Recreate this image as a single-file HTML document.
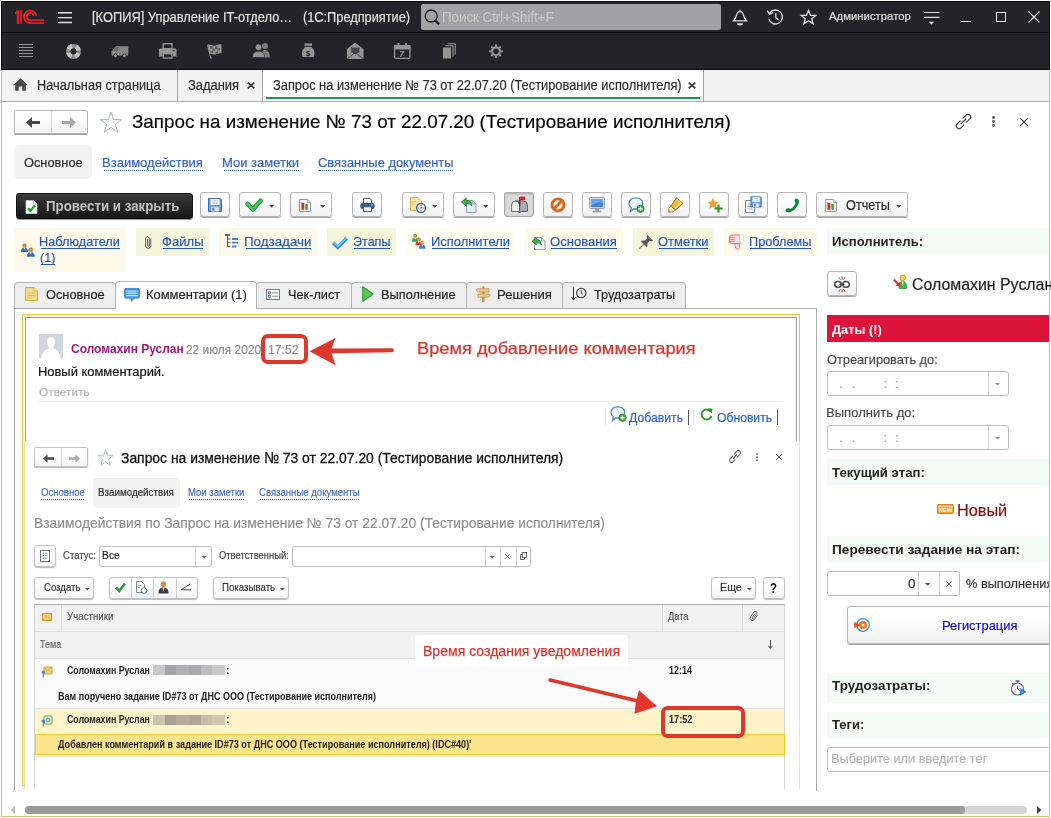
<!DOCTYPE html>
<html lang="ru">
<head>
<meta charset="utf-8">
<title>Запрос на изменение № 73 от 22.07.20</title>
<style>
*{box-sizing:border-box;margin:0;padding:0}
html,body{width:1051px;height:818px;overflow:hidden;background:#fff}
body{font-family:"Liberation Sans",sans-serif;font-size:13px;color:#222;position:relative}
.a{position:absolute}
.t{position:absolute;white-space:nowrap;line-height:1;transform-origin:0 0;-webkit-text-stroke:0.18px currentColor}
svg{position:absolute;overflow:visible}
.btn{position:absolute;border:1px solid #b6b6b6;border-radius:3px;background:linear-gradient(#ffffff 30%,#f0f0f0);box-shadow:0 1px 0 #a6a6a6}
.btn2{position:absolute;border:1px solid #c2c2c2;border-radius:3px;background:linear-gradient(#ffffff 30%,#f3f3f3);box-shadow:0 1px 1px #b9b9b9}
.u{text-decoration:underline;text-underline-offset:2px}
.dl{border-bottom:1px dotted #3a66c8}
.caret{position:absolute;width:0;height:0;border-left:3px solid transparent;border-right:3px solid transparent;border-top:3px solid #444}
.inp{position:absolute;border:1px solid #bdbdbd;border-radius:3px;background:#fff}
.sub{filter:blur(0.35px)}
</style>
</head>
<body>
<div class="a" style="left:1px;top:1px;width:1049px;height:69px;background:#0c0c0e;"></div>
<div class="a" style="left:2px;top:2px;width:1047px;height:30px;background:#242428;"></div>
<div class="a" style="left:2px;top:33px;width:1047px;height:36px;background:#242428;"></div>
<div class="a" style="left:1px;top:70px;width:1px;height:747px;background:#cdbf78;"></div>
<div class="a" style="left:1049px;top:70px;width:1px;height:747px;background:#cdbf78;"></div>
<div class="a" style="left:1px;top:816px;width:1049px;height:1px;background:#cdbf78;"></div>
<svg style="left:0px;top:0px" width="50" height="30" viewBox="0 0 50 30" fill="none" stroke="#e01f26">
<path d="M15.300 14L17.600 10.900" stroke-width="2"/>
<path d="M18 10.300V24" stroke-width="2.400"/><path d="M20.900 10.300V24" stroke-width="1.700"/>
<path d="M36.300 15.700A6.200 6.200 0 1 0 30.200 23.050H44.100" stroke-width="1.800"/>
<path d="M33.800 15.700A3.650 3.650 0 1 0 30.200 20.150H44.100" stroke-width="1.800"/>
</svg>
<svg style="left:58px;top:12px" width="14" height="11" viewBox="0 0 14 11" stroke="#e4e4e4" stroke-width="1.400"><path d="M0 0.700H14M0 5.600H14M0 10.500H14"/></svg>
<div class="t" style="left:91.60px;top:10.15px;font-size:14px;color:#e4e4e4;transform:scaleX(0.9187);">[КОПИЯ] Управление IT-отдело…</div>
<div class="t" style="left:303.23px;top:10.15px;font-size:14px;color:#e4e4e4;transform:scaleX(0.9118);">(1С:Предприятие)</div>
<div class="a" style="left:421px;top:4px;width:300px;height:26px;background:#a2a2a4;border-radius:2px"></div>
<svg style="left:424px;top:8px" width="17" height="18" viewBox="0 0 17 18" fill="none" stroke="#1c1c1c" stroke-width="1.300"><circle cx="7.200" cy="8" r="6"/><path d="M11.400 12.600L15.200 16.600" stroke-width="2.200"/></svg>
<div class="t" style="left:441.94px;top:10.15px;font-size:14px;color:#c6c6c6;transform:scaleX(0.9501);">Поиск Ctrl+Shift+F</div>
<svg style="left:732px;top:8px" width="16" height="19" viewBox="0 0 16 19" fill="none" stroke="#dedede" stroke-width="1.200"><path d="M8 1.800V3.300M5.600 4.600C6.500 3.400 9.500 3.400 10.400 4.600C11.800 7 11.500 10 14.600 12.800H1.400C4.500 10 4.200 7 5.600 4.600Z"/><path d="M5 15.200H11A3 2.200 0 0 1 5 15.200Z" fill="#dedede" stroke="none"/></svg>
<svg style="left:765.5px;top:8px" width="19" height="18" viewBox="0 0 19 18" fill="none" stroke="#dedede" stroke-width="1.300"><path d="M3.800 4.800A7 7 0 1 1 2.800 11.300"/><path d="M1.200 2.600L3.400 6.200L7 4.600"/><path d="M9.800 5.200V9.600L12.600 11.800"/></svg>
<svg style="left:799.5px;top:8.5px" width="17" height="17" viewBox="0 0 17 17" fill="none" stroke="#dedede" stroke-width="1.300"><path d="M8.500 1.500L10.600 6.400H15.800L11.700 9.700L13.200 14.900L8.500 11.800L3.800 14.900L5.300 9.700L1.200 6.400H6.400Z"/></svg>
<div class="t" style="left:829.00px;top:11.49px;font-size:11px;color:#e2e2e2;transform:scaleX(1.0314);">Администратор</div>
<svg style="left:924px;top:11px" width="16" height="14" viewBox="0 0 16 14" stroke="#dedede" stroke-width="1.200"><path d="M0 1.500H15.500M0 6.300H15.500" fill="none"/><path d="M4.800 10.800H10.200L7.500 13.600Z" fill="#dedede" stroke="none"/></svg>
<div class="a" style="left:961px;top:21px;width:9.5px;height:1.3px;background:#e4e4e4;"></div>
<div class="a" style="left:996.200px;top:12.200px;width:9.600px;height:9.600px;border:1.250px solid #e4e4e4"></div>
<svg style="left:1028px;top:11px" width="12" height="12" viewBox="0 0 12 12" stroke="#e4e4e4" stroke-width="1.150"><path d="M0.500 0.500L11.500 11.500M11.500 0.500L0.500 11.500"/></svg>
<svg style="left:0px;top:33px" width="520" height="37" viewBox="0 0 520 37" >
<g fill="none" stroke="#959595" stroke-width="1"><path d="M19 11.500H33M19 14.500H33M19 17.500H33M19 20.500H33M19 23.500H33"/></g>
<circle cx="73.500" cy="18.400" r="5.300" fill="none" stroke="#8b8b8b" stroke-width="4.400"/>
<circle cx="73.500" cy="18.400" r="5.300" fill="none" stroke="#c4c4c4" stroke-width="4.400" stroke-dasharray="4.700 3.625" stroke-dashoffset="-1.810"/>
<path d="M111.500 22.500V18.300L115.800 13.300H128.300V22.500Z" fill="#858585"/>
<path d="M116.300 14.300L113.300 18H117.800V14.300Z" fill="#242428" opacity="0.350"/>
<circle cx="115.500" cy="22.800" r="1.900" fill="#959595" stroke="#242428" stroke-width="0.800"/><circle cx="124.300" cy="22.800" r="1.900" fill="#959595" stroke="#242428" stroke-width="0.800"/>
<rect x="163.200" y="10.700" width="8.800" height="5" fill="none" stroke="#959595" stroke-width="1.400"/>
<path d="M159.500 15.500H175.500A1 1 0 0 1 176.500 16.500V23.500H173V20H162.500V23.500H159V16.500A1 1 0 0 1 159.500 15.500Z" fill="#959595"/>
<rect x="163.200" y="20.700" width="8.800" height="4.300" fill="none" stroke="#959595" stroke-width="1.400"/>
<rect x="172.800" y="17" width="1.800" height="1.300" fill="#242428"/>
<path d="M207 12C210 10.500 212.500 13.500 215.500 12.500C218 11.700 219.500 10.800 221.500 11.500V20.500C219.500 20 218 21 215.500 21.500C213 22 211.500 20.300 210 20.800L211.800 25.500H210.300Z" fill="#959595"/>
<g fill="#242428" opacity="0.500"><rect x="210" y="13" width="2.500" height="2.500"/><rect x="215" y="13.500" width="2.500" height="2.500"/><rect x="212.500" y="15.500" width="2.500" height="2.500"/><rect x="217.500" y="15" width="2.500" height="2.500"/><rect x="210.500" y="18" width="2.500" height="2.200"/><rect x="215.500" y="18.500" width="2.500" height="2.200"/></g>
<circle cx="265" cy="13" r="3" fill="#7d7d7d"/><path d="M260.500 24.500C260.500 19 262 17 265 17C268 17 269.800 19 269.800 24.500Z" fill="#7d7d7d"/>
<circle cx="258.500" cy="14.300" r="3.300" fill="#959595" stroke="#242428" stroke-width="0.700"/><path d="M252.500 24.500C252.500 20 254.500 18.300 258.500 18.300C262.500 18.300 264.500 20 264.500 24.500Z" fill="#959595" stroke="#242428" stroke-width="0.700"/>
<path d="M304.500 10.500H312V12.800H304.500ZM305.500 13.800H311C314.500 16.500 315 20 314 24H302.500C301.500 20 302 16.500 305.500 13.800Z" fill="#959595"/>
<text x="306" y="22.500" font-family="Liberation Sans,sans-serif" font-size="7.500" font-weight="bold" fill="#242428">$</text>
<path d="M347 16L355 9.500L363.500 16V26H347Z" fill="#959595"/>
<path d="M351 14.500H359.500V19L355.200 21.500L351 19Z" fill="#242428" opacity="0.700"/>
<path d="M347.500 25.500L354 20.500M363 25.500L356.500 20.500" stroke="#242428" stroke-width="0.900" opacity="0.700"/>
<rect x="394.600" y="12.600" width="15.300" height="12.800" rx="1.500" fill="none" stroke="#959595" stroke-width="1.300"/>
<path d="M394 12H410.500V16.500H394ZM397.500 10H399.500V13H397.500ZM405 10H407V13H405Z" fill="#959595"/>
<text x="399.300" y="24.300" font-family="Liberation Sans,sans-serif" font-size="8.500" font-weight="bold" font-style="italic" fill="#959595">7</text>
<path d="M443 14.500H451V25.500H443Z" fill="#959595"/>
<g fill="none" stroke="#959595" stroke-width="1.100"><path d="M445.300 12.700H453V23.500M447.500 10.800H455.200V21.500"/></g>
<circle cx="496" cy="18.300" r="3.900" fill="none" stroke="#959595" stroke-width="2.200"/>
<path d="M496 11.500V14M496 22.600V25.100M489.200 18.300H491.700M500.300 18.300H502.800M491.200 13.500L493 15.300M499 21.300L500.800 23.100M500.800 13.500L499 15.300M493 21.300L491.200 23.100" stroke="#959595" stroke-width="2" fill="none"/>
</svg>
<div class="a" style="left:2px;top:70px;width:1047px;height:31px;background:#f2f2f2;"></div>
<div class="a" style="left:263px;top:70px;width:440px;height:31px;background:#fff;"></div>
<div class="a" style="left:2px;top:101px;width:1047px;height:1px;background:#ababab;"></div>
<div class="a" style="left:177px;top:70px;width:1px;height:31px;background:#a4a4a4;"></div>
<div class="a" style="left:262px;top:70px;width:1px;height:31px;background:#a4a4a4;"></div>
<div class="a" style="left:703px;top:70px;width:1px;height:31px;background:#a4a4a4;"></div>
<div class="a" style="left:266px;top:97px;width:434px;height:2px;background:#109a48;"></div>
<svg style="left:13px;top:78px" width="15" height="13" viewBox="0 0 15 13" fill="#484848"><path d="M7.500 0.300L15 7.300H12.800V12.800H9.200V8.500H5.800V12.800H2.200V7.300H0Z"/></svg>
<div class="t" style="left:36.98px;top:78.15px;font-size:14px;color:#2a2a2a;transform:scaleX(0.9115);">Начальная страница</div>
<div class="t" style="left:187.91px;top:78.15px;font-size:14px;color:#2a2a2a;transform:scaleX(0.9227);">Задания</div>
<svg style="left:246.7px;top:82.2px" width="8" height="7" viewBox="0 0 8 7" stroke="#3a3a3a" stroke-width="1.800"><path d="M0.700 0.600L7.300 6.400M7.300 0.600L0.700 6.400"/></svg>
<div class="t" style="left:272.61px;top:78.15px;font-size:14px;color:#2a2a2a;transform:scaleX(0.9172);">Запрос на изменение № 73 от 22.07.20 (Тестирование исполнителя)</div>
<svg style="left:687.7px;top:82.2px" width="8" height="7" viewBox="0 0 8 7" stroke="#3a3a3a" stroke-width="1.800"><path d="M0.700 0.600L7.300 6.400M7.300 0.600L0.700 6.400"/></svg>
<div class="btn" style="left:14px;top:110px;width:74px;height:24px;border-radius:1.500px;border-color:#b2b2b2;box-shadow:0 1px 0 #9e9e9e,inset 0 0 0 1px #fff"></div>
<div class="a" style="left:51px;top:111px;width:1px;height:22px;background:#d4d4d4;"></div>
<svg style="left:26px;top:117px" width="14" height="11" viewBox="0 0 14 11" fill="#454545"><path d="M0 5.500L6 0V4.100H14V6.900H6V11Z"/></svg>
<svg style="left:62px;top:117px" width="14" height="11" viewBox="0 0 14 11" fill="#a6a6a6"><path d="M14 5.500L8 0V4.100H0V6.900H8V11Z"/></svg>
<svg style="left:99px;top:111px" width="24" height="22" viewBox="0 0 24 22" fill="none" stroke="#aab2ba" stroke-width="1"><path d="M12 1.200L14.700 8.600H22.600L16.300 13.300L18.700 21L12 16.400L5.300 21L7.700 13.300L1.400 8.600H9.300Z"/></svg>
<div class="t" style="left:131.94px;top:112.22px;font-size:19px;color:#000;transform:scaleX(0.9901);">Запрос на изменение № 73 от 22.07.20 (Тестирование исполнителя)</div>
<svg style="left:955px;top:113px" width="17" height="17" viewBox="0 0 17 17" fill="none" stroke="#3a3a3a" stroke-width="1.150"><g transform="translate(8.500,8.450) rotate(-45)"><rect x="-9" y="-2.700" width="18" height="5.400" rx="2.700" stroke-dasharray="4.800 3 18.080 3 13.280 0"/><path d="M-3.800 0H3.800"/></g></svg>
<div class="a" style="left:992.300px;top:116.300px;width:2.600px;height:2.600px;border-radius:50%;background:#6b6b6b;box-shadow:0 3.900px 0 #6b6b6b,0 7.900px 0 #6b6b6b"></div>
<svg style="left:1019.5px;top:117.5px" width="8" height="8" viewBox="0 0 8 8" stroke="#333" stroke-width="1.100"><path d="M0.300 0.300L7.700 7.700M7.700 0.300L0.300 7.700"/></svg>
<div class="a" style="left:14px;top:145px;width:78px;height:34px;background:#f1f1f1;border-radius:5px"></div>
<div class="t" style="left:23.92px;top:156.00px;font-size:13px;color:#2a2a2a;transform:scaleX(0.9840);">Основное</div>
<div class="t" style="left:102.46px;top:156.00px;font-size:13px;color:#3463c4;transform:scaleX(1.0014);">Взаимодействия</div>
<div class="a" style="left:103.5px;top:169.5px;width:99px;height:0;border-top:1px dotted #3463c4"></div>
<div class="t" style="left:222.46px;top:156.00px;font-size:13px;color:#3463c4;transform:scaleX(0.9999);">Мои заметки</div>
<div class="a" style="left:223.5px;top:169.5px;width:75px;height:0;border-top:1px dotted #3463c4"></div>
<div class="t" style="left:318.35px;top:156.00px;font-size:13px;color:#3463c4;transform:scaleX(0.9926);">Связанные документы</div>
<div class="a" style="left:319px;top:169.5px;width:134px;height:0;border-top:1px dotted #3463c4"></div>
<div class="a" style="left:16px;top:193px;width:177px;height:26px;border-radius:3px;background:linear-gradient(#3c3c3c,#2a2a2a 45%,#171717);border:1px solid #111;box-shadow:0 1px 0 #9a9a9a"></div>
<svg style="left:25px;top:199.5px" width="13" height="14" viewBox="0 0 13 14" ><path d="M1 0.500H8.500L12 4V13.500H1Z" fill="#fff" stroke="#c9c9c9" stroke-width="0.800"/><path d="M8.500 0.500V4H12" fill="#ddd" stroke="#bbb" stroke-width="0.600"/><path d="M2.800 8.300L5.200 10.800L10 5.600" fill="none" stroke="#21a03a" stroke-width="2.200"/></svg>
<div class="t" style="left:45.64px;top:199.15px;font-size:14px;color:#c2c2c2;font-weight:bold;-webkit-text-stroke:0;transform:scaleX(0.9505);">Провести и закрыть</div>
<div class="btn" style="left:200px;top:192px;width:30px;height:24.5px;"></div>
<svg style="left:208px;top:198px" width="14" height="14" viewBox="0 0 14 14" ><path d="M0.500 0.500H12.500L13.500 1.500V13.500H0.500Z" fill="#6a9ce2" stroke="#3a6cb8" stroke-width="1"/><rect x="2.500" y="1" width="9" height="6" fill="#fff"/><path d="M4 3H10M4 5H10" stroke="#8db0e2" stroke-width="0.800"/><rect x="3.200" y="8.800" width="7.600" height="4.700" fill="#dfe5ec"/><rect x="4.300" y="9.800" width="2.200" height="2.900" fill="#6b7c92"/></svg>
<div class="btn" style="left:239px;top:192px;width:42px;height:24.5px;"></div>
<svg style="left:245px;top:198px" width="18" height="14" viewBox="0 0 18 14" ><path d="M2.600 5.800L7.900 11.600L15.600 2.600" fill="none" stroke="#1e8c3a" stroke-width="4.400" stroke-linecap="round" stroke-linejoin="round"/><path d="M2.600 5.800L7.900 11.600L15.600 2.600" fill="none" stroke="#3fc45a" stroke-width="2.800" stroke-linecap="round" stroke-linejoin="round"/></svg>
<svg style="left:268.5px;top:205px" width="5.40" height="2.70" viewBox="0 0 5.40 2.70"><path d="M0 0H5.40L2.70 2.70Z" fill="#444"/></svg>
<div class="btn" style="left:290px;top:192px;width:42px;height:24.5px;"></div>
<svg style="left:299px;top:199px" width="12" height="13" viewBox="0 0 12 13" ><path d="M0.500 0.500H8.500L11.500 3.500V12.500H0.500Z" fill="#fff" stroke="#8a97a8" stroke-width="1"/><path d="M8.500 0.500V3.500H11.500" fill="#e6e9ee" stroke="#8a97a8" stroke-width="0.800"/><path d="M2.300 3V11" stroke="#555" stroke-width="0.700"/><rect x="3" y="3.800" width="2.300" height="7" fill="#e0281e"/><rect x="6.300" y="5" width="2.500" height="5.800" fill="#2f9a3a"/></svg>
<svg style="left:320px;top:205px" width="5.40" height="2.70" viewBox="0 0 5.40 2.70"><path d="M0 0H5.40L2.70 2.70Z" fill="#444"/></svg>
<div class="btn" style="left:352px;top:192px;width:30px;height:24.5px;"></div>
<svg style="left:359.5px;top:197.5px" width="15" height="14" viewBox="0 0 15 14" ><path d="M3.500 0.600H10L11.500 2.100V5.500H3.500Z" fill="#fff" stroke="#35557f" stroke-width="1"/><rect x="0.800" y="5.300" width="13.400" height="5.200" rx="1.500" fill="#3b5f94" stroke="#2b4a78" stroke-width="0.700"/><rect x="3.500" y="8.800" width="8" height="4.600" fill="#fff" stroke="#35557f" stroke-width="1"/><rect x="11.300" y="6.400" width="1.600" height="1.200" fill="#cfe0f5"/></svg>
<div class="btn" style="left:402px;top:192px;width:42px;height:24.5px;"></div>
<svg style="left:409.5px;top:197px" width="16" height="16" viewBox="0 0 16 16" ><path d="M0.500 0.500H8L11.500 4V13.500H0.500Z" fill="#f7e4a4" stroke="#d9b24c" stroke-width="1"/><path d="M2.500 4.500H6M2.500 7H5" stroke="#caa040" stroke-width="0.800" stroke-dasharray="1.200 1"/><circle cx="11" cy="11" r="4.400" fill="#fff" stroke="#3a73c2" stroke-width="1.500"/><path d="M11 7.600V8.800M11 13.200V14.400M7.600 11H8.800M13.200 11H14.400M11 9.500V11L12.300 10.200" fill="none" stroke="#e0281e" stroke-width="1.100"/></svg>
<svg style="left:432px;top:205px" width="5.40" height="2.70" viewBox="0 0 5.40 2.70"><path d="M0 0H5.40L2.70 2.70Z" fill="#444"/></svg>
<div class="btn" style="left:453px;top:192px;width:42px;height:24.5px;"></div>
<svg style="left:460.5px;top:197px" width="16" height="16" viewBox="0 0 16 16" ><path d="M5.800 3.500H11.500L15 7V15.500H5.800Z" fill="#e6effa" stroke="#8aa2c2" stroke-width="1"/><path d="M11.500 3.500V7H15" fill="#cfdcec" stroke="#8aa2c2" stroke-width="0.800"/><path d="M0.500 5L5.200 0.800V3.200C8.800 3.200 10.800 5.200 10.800 9C9.400 7.100 8.200 6.600 5.200 6.700V9.200Z" fill="#3cab50" stroke="#1f7a30" stroke-width="0.800"/></svg>
<svg style="left:482.5px;top:205px" width="5.40" height="2.70" viewBox="0 0 5.40 2.70"><path d="M0 0H5.40L2.70 2.70Z" fill="#444"/></svg>
<div class="btn" style="left:504px;top:192px;width:30px;height:24.5px;background:#dadada;border-color:#a9a9a9;box-shadow:inset 0 1px 2px #b0b0b0"></div>
<svg style="left:511px;top:195.5px" width="17" height="17" viewBox="0 0 17 17" ><path d="M0.600 9A4 4 0 0 1 8.600 9V15.500H0.600Z" fill="#f1f1f1" stroke="#6c6c6c" stroke-width="1"/><path d="M4.600 5H12.500A4 4 0 0 1 16.400 9V15.500H8.600V9A4 4 0 0 0 4.600 5Z" fill="#a9adb3" stroke="#5e6166" stroke-width="1"/><rect x="7.600" y="15" width="2" height="2" fill="#666"/><path d="M8.800 10.500V1" stroke="#7a1010" stroke-width="1.200"/><rect x="9" y="0.600" width="5.200" height="3.600" fill="#e0202a"/></svg>
<div class="btn" style="left:543px;top:192px;width:30px;height:24.5px;"></div>
<svg style="left:550px;top:197px" width="16" height="16" viewBox="0 0 16 16" ><circle cx="8" cy="7.800" r="6" fill="#f5e9dd" stroke="#d8661f" stroke-width="2.800"/><path d="M3.800 12L12.200 3.600" stroke="#d8661f" stroke-width="2.800"/><ellipse cx="8" cy="15.300" rx="6" ry="0.800" fill="#bbb" opacity="0.600"/></svg>
<div class="btn" style="left:582px;top:192px;width:30px;height:24.5px;"></div>
<svg style="left:589px;top:197px" width="16" height="16" viewBox="0 0 16 16" ><rect x="0.600" y="0.600" width="14.800" height="11" rx="1" fill="#e8e8e8" stroke="#8e949c" stroke-width="1"/><rect x="2" y="2" width="12" height="8.200" fill="#3f7fd6"/><path d="M2 2H14V5.500C9 5 5 7 2 8.500Z" fill="#6aa2ea"/><path d="M6 12H10V13.800H6Z" fill="#9aa"/><rect x="3.800" y="13.800" width="8.400" height="1.400" rx="0.500" fill="#8e949c"/></svg>
<div class="btn" style="left:621px;top:192px;width:30px;height:24.5px;"></div>
<svg style="left:628px;top:196.5px" width="17" height="16" viewBox="0 0 17 16" ><path d="M1 6.500C1 3 3.800 0.800 7.800 0.800C11.800 0.800 14.600 3 14.600 6.500C14.600 10 11.800 12 7.800 12C7 12 6.300 11.900 5.700 11.800L2.500 14.500L3.300 10.800C1.800 9.800 1 8.300 1 6.500Z" fill="#eef5fd" stroke="#4f86c9" stroke-width="1.300"/><circle cx="12.500" cy="11.800" r="3.700" fill="#43a83a" stroke="#2a7d24" stroke-width="0.700"/><path d="M12.500 9.700V13.900M10.400 11.800H14.600" stroke="#fff" stroke-width="1.300"/></svg>
<div class="btn" style="left:660px;top:192px;width:30px;height:24.5px;"></div>
<svg style="left:667px;top:196.5px" width="17" height="16" viewBox="0 0 17 16" ><path d="M9.500 0.800L16 6.500L8.500 13L3.800 9Z" fill="#e9b83c" stroke="#a8781a" stroke-width="1"/><path d="M10 2.500L14 6L8.500 11" fill="none" stroke="#f7dd8a" stroke-width="1.300"/><path d="M3.800 9L8.500 13L6 14.800L2 15.200L1.800 11.500Z" fill="#f3ead2" stroke="#a8781a" stroke-width="0.900"/><path d="M0.500 15.500L2 13.200L3.500 15.200Z" fill="#c88a10"/></svg>
<div class="btn" style="left:699px;top:192px;width:30px;height:24.5px;"></div>
<svg style="left:706.5px;top:197px" width="17" height="16" viewBox="0 0 17 16" ><path d="M6 0.500L7.600 4.600L12 4.800L8.600 7.500L9.800 11.800L6 9.400L2.200 11.800L3.400 7.500L0.200 4.800L4.400 4.600Z" fill="#f29a2e"/><path d="M11.500 7.500V15.500M7.500 11.500H15.500" stroke="#2f9a2f" stroke-width="2.200"/></svg>
<div class="btn" style="left:738px;top:192px;width:30px;height:24.5px;"></div>
<svg style="left:745px;top:196px" width="17" height="17" viewBox="0 0 17 17" ><path d="M0.500 4.500H9.500V16.500H0.500Z" fill="#fff" stroke="#7d8a99" stroke-width="1"/><path d="M2.500 8H7.500M2.500 10.500H7.500M2.500 13H7.500" stroke="#9aa5b3" stroke-width="0.900"/><g transform="translate(5.500,0.300) scale(0.800)"><path d="M0.500 0.500H12.500L13.500 1.500V13.500H0.500Z" fill="#6a9ce2" stroke="#3a6cb8" stroke-width="1"/><rect x="2.500" y="1" width="9" height="6" fill="#fff"/><path d="M4 3H10M4 5H10" stroke="#8db0e2" stroke-width="0.800"/><rect x="3.200" y="8.800" width="7.600" height="4.700" fill="#dfe5ec"/><rect x="4.300" y="9.800" width="2.200" height="2.900" fill="#6b7c92"/></g></svg>
<div class="btn" style="left:777px;top:192px;width:30px;height:24.5px;"></div>
<svg style="left:785px;top:197.5px" width="15" height="15" viewBox="0 0 15 15" ><path d="M11.300 0.600C12.500 0.300 13.800 1.700 14 3C14.400 7 9.500 13.500 4 14.200C2.300 14.400 0.600 13.700 0.500 12.500C0.400 11.600 1.300 10.600 3 10.300C4.200 10.100 4.800 10.900 5.500 10.800C7.500 10.300 10.300 6.800 10.300 4.800C10.300 4 9.500 3.700 9.500 2.600C9.500 1.500 10.300 0.900 11.300 0.600Z" fill="#108a3e"/></svg>
<div class="btn" style="left:816px;top:192px;width:92px;height:24.5px;"></div>
<svg style="left:825px;top:199px" width="12" height="13" viewBox="0 0 12 13" ><path d="M0.500 0.500H8.500L11.500 3.500V12.500H0.500Z" fill="#fff" stroke="#8a97a8" stroke-width="1"/><path d="M8.500 0.500V3.500H11.500" fill="#e6e9ee" stroke="#8a97a8" stroke-width="0.800"/><path d="M2.300 3V11" stroke="#555" stroke-width="0.700"/><rect x="3" y="3.800" width="2.300" height="7" fill="#e0281e"/><rect x="6.300" y="5" width="2.500" height="5.800" fill="#2f9a3a"/></svg>
<div class="t" style="left:845.93px;top:198.15px;font-size:14px;color:#2a2a2a;transform:scaleX(0.9075);">Отчеты</div>
<svg style="left:895.5px;top:205px" width="5.40" height="2.70" viewBox="0 0 5.40 2.70"><path d="M0 0H5.40L2.70 2.70Z" fill="#444"/></svg>
<div class="a" style="left:14px;top:228px;width:112px;height:44px;background:#fdf9eb;"></div>
<div class="a" style="left:136px;top:228px;width:73px;height:28px;background:#f5f5dc;"></div>
<div class="a" style="left:219px;top:228px;width:98px;height:28px;background:#fdf9eb;"></div>
<div class="a" style="left:327px;top:228px;width:69px;height:28px;background:#f5f5dc;"></div>
<div class="a" style="left:406px;top:228px;width:109px;height:28px;background:#fdfdf1;"></div>
<div class="a" style="left:525px;top:228px;width:98px;height:28px;background:#fdf9eb;"></div>
<div class="a" style="left:633px;top:228px;width:81px;height:28px;background:#f5f5dc;"></div>
<div class="a" style="left:724px;top:228px;width:93px;height:28px;background:#fdf9eb;"></div>
<svg style="left:19.5px;top:243px" width="16" height="16" viewBox="0 0 16 16" ><g transform="translate(4.5,5.5) scale(0.85)"><circle cx="0" cy="-3.300" r="2.600" fill="#c98a4a"/><path d="M-4.200 4C-4.200 0.500 -2.500 -0.800 0 -0.800C2.500 -0.800 4.200 0.500 4.200 4Z" fill="#2d6fc4"/><path d="M-1 -0.800L0 1.500L1 -0.800Z" fill="#fff"/></g><g transform="translate(10.8,10) scale(0.95)"><circle cx="0" cy="-3.300" r="2.600" fill="#c98a4a"/><path d="M-4.200 4C-4.200 0.500 -2.500 -0.800 0 -0.800C2.500 -0.800 4.200 0.500 4.200 4Z" fill="#2d6fc4"/><path d="M-1 -0.800L0 1.500L1 -0.800Z" fill="#fff"/></g></svg>
<div class="t" style="left:39.48px;top:235.19px;font-size:13.6px;color:#2757bd;transform:scaleX(0.9369);">Наблюдатели</div>
<div class="a" style="left:40.5px;top:248px;width:79px;height:1px;background:#2757bd;"></div>
<div class="t" style="left:39.74px;top:251.29px;font-size:13.6px;color:#2757bd;transform:scaleX(0.9316);">(1)</div>
<div class="a" style="left:40.5px;top:264px;width:14px;height:1px;background:#2757bd;"></div>
<svg style="left:144px;top:235px" width="9" height="15" viewBox="0 0 9 15" fill="none" stroke="#5a5a5a" stroke-width="1"><path d="M6.800 3.500V10.800A2.600 2.600 0 0 1 1.600 10.800V3.200A1.900 1.900 0 0 1 5.300 3.200V10.400A0.800 0.800 0 0 1 3.600 10.400V4.200" /></svg>
<div class="t" style="left:161.78px;top:235.19px;font-size:13.6px;color:#2757bd;transform:scaleX(0.9627);">Файлы</div>
<div class="a" style="left:162.5px;top:248px;width:40px;height:1px;background:#2757bd;"></div>
<svg style="left:225px;top:234px" width="14" height="14" viewBox="0 0 14 14" ><path d="M0 1H5" stroke="#444" stroke-width="1.600"/><path d="M2.500 1.500V12.500H5.500M2.500 5H5.500M2.500 8.700H5.500" fill="none" stroke="#555" stroke-width="1"/><path d="M7 5H13M7 8.700H13M7 12.500H11.500" stroke="#3a86d8" stroke-width="1.800"/></svg>
<div class="t" style="left:244.43px;top:235.19px;font-size:13.6px;color:#2757bd;transform:scaleX(0.9829);">Подзадачи</div>
<div class="a" style="left:245.5px;top:248px;width:65.5px;height:1px;background:#2757bd;"></div>
<svg style="left:332px;top:236px" width="16" height="13" viewBox="0 0 16 13" ><path d="M1.200 6.800L5.800 11.300L14.800 2.200" fill="none" stroke="#2f8fe0" stroke-width="3.600"/><path d="M1.600 6.300L5.800 10.300L14.400 1.800" fill="none" stroke="#7cc4f7" stroke-width="1.300"/></svg>
<div class="t" style="left:352.87px;top:235.19px;font-size:13.6px;color:#2757bd;transform:scaleX(0.9239);">Этапы</div>
<div class="a" style="left:353.5px;top:248px;width:36px;height:1px;background:#2757bd;"></div>
<svg style="left:411px;top:234px" width="16" height="16" viewBox="0 0 16 16" ><g transform="translate(4.2,4.5) scale(0.8)"><circle cx="0" cy="-3.300" r="2.600" fill="#c9924a"/><path d="M-4.200 4C-4.200 0.500 -2.500 -0.800 0 -0.800C2.500 -0.800 4.200 0.500 4.200 4Z" fill="#3aa04a"/><path d="M-1 -0.800L0 1.500L1 -0.800Z" fill="#fff"/></g><g transform="translate(7.8,8) scale(0.8)"><circle cx="0" cy="-3.300" r="2.600" fill="#c9924a"/><path d="M-4.200 4C-4.200 0.500 -2.500 -0.800 0 -0.800C2.500 -0.800 4.200 0.500 4.200 4Z" fill="#c73a3a"/><path d="M-1 -0.800L0 1.500L1 -0.800Z" fill="#fff"/></g><g transform="translate(11.3,11.5) scale(0.8)"><circle cx="0" cy="-3.300" r="2.600" fill="#e0a24a"/><path d="M-4.200 4C-4.200 0.500 -2.500 -0.800 0 -0.800C2.500 -0.800 4.200 0.500 4.200 4Z" fill="#3a86d0"/><path d="M-1 -0.800L0 1.500L1 -0.800Z" fill="#fff"/></g></svg>
<div class="t" style="left:430.96px;top:235.19px;font-size:13.6px;color:#2757bd;transform:scaleX(0.9516);">Исполнители</div>
<div class="a" style="left:432px;top:248px;width:77px;height:1px;background:#2757bd;"></div>
<svg style="left:530.5px;top:234.5px" width="15" height="15" viewBox="0 0 15 15" ><path d="M3.500 2.500H10.500L14 6V14.500H3.500Z" fill="#f4f8fd" stroke="#8a9db8" stroke-width="1"/><path d="M10.500 2.500V6H14" fill="#d3deec" stroke="#8a9db8" stroke-width="0.800"/><path d="M1 6.200L5.300 2.300V4.500C8.600 4.500 10.400 6.400 10.400 9.800C9.100 8.100 8 7.700 5.300 7.800V10Z" fill="#3cab50" stroke="#1f7a30" stroke-width="0.700"/></svg>
<div class="t" style="left:550.41px;top:235.19px;font-size:13.6px;color:#2757bd;transform:scaleX(0.9623);">Основания</div>
<div class="a" style="left:551px;top:248px;width:65.5px;height:1px;background:#2757bd;"></div>
<svg style="left:639px;top:234px" width="15" height="15" viewBox="0 0 15 15" ><path d="M8.200 0.800L14.200 6.800L12.600 7.400L10.600 6.800L8.300 9.600L8.600 12.200L7.400 13L2 7.600L2.800 6.400L5.400 6.700L8.200 4.400L7.600 2.400Z" fill="#565656"/><path d="M4.600 10.400L0.300 14.700" stroke="#7a7a7a" stroke-width="1.100"/><path d="M9 2.500L12.500 6" stroke="#a0a0a0" stroke-width="1"/></svg>
<div class="t" style="left:658.42px;top:235.19px;font-size:13.6px;color:#2757bd;transform:scaleX(0.9519);">Отметки</div>
<div class="a" style="left:659px;top:248px;width:49px;height:1px;background:#2757bd;"></div>
<svg style="left:729px;top:234px" width="16" height="16" viewBox="0 0 16 16" ><path d="M2.500 1H11V9.600H2.500A1.800 1.800 0 0 1 0.800 7.800V2.800A1.800 1.800 0 0 1 2.500 1Z" fill="#fde6e6" stroke="#e46a6a" stroke-width="1"/><path d="M0.800 3.200H6M0.800 5.300H6.300M0.800 7.400H6" stroke="#e46a6a" stroke-width="0.900"/><path d="M5.800 9.600C6 12 6.600 14 7.800 15C9 15.600 10.300 15 10.300 13.500V9.600Z" fill="#fde6e6" stroke="#e46a6a" stroke-width="1"/><rect x="10.800" y="0.800" width="4" height="8" rx="1" fill="#fff" stroke="#d9cfcf" stroke-width="0.800"/></svg>
<div class="t" style="left:748.98px;top:235.19px;font-size:13.6px;color:#2757bd;transform:scaleX(0.9355);">Проблемы</div>
<div class="a" style="left:750px;top:248px;width:60.5px;height:1px;background:#2757bd;"></div>
<div class="a" style="left:14px;top:308px;width:803px;height:483px;background:#fff;border:1px solid #ababab;border-bottom:none"></div>
<div class="a" style="left:14px;top:282.4px;width:102px;height:25.6px;background:#eeeeee;border:1px solid #b3b3b3;border-bottom:none;border-radius:4px 4px 0 0"></div>
<div class="a" style="left:256px;top:282.4px;width:95.5px;height:25.6px;background:#eeeeee;border:1px solid #b3b3b3;border-bottom:none;border-radius:4px 4px 0 0"></div>
<div class="a" style="left:350.5px;top:282.4px;width:116.5px;height:25.6px;background:#eeeeee;border:1px solid #b3b3b3;border-bottom:none;border-radius:4px 4px 0 0"></div>
<div class="a" style="left:466px;top:282.4px;width:97px;height:25.6px;background:#eeeeee;border:1px solid #b3b3b3;border-bottom:none;border-radius:4px 4px 0 0"></div>
<div class="a" style="left:562px;top:282.4px;width:124px;height:25.6px;background:#eeeeee;border:1px solid #b3b3b3;border-bottom:none;border-radius:4px 4px 0 0"></div>
<div class="a" style="left:115px;top:281px;width:142px;height:28px;background:#fff;border:1px solid #b3b3b3;border-bottom:none;border-radius:4px 4px 0 0"></div>
<svg style="left:24.5px;top:287px" width="13" height="14" viewBox="0 0 13 14" ><path d="M0.500 0.500H9L12.500 4V13.500H0.500Z" fill="#f3d98a" stroke="#d6a93a" stroke-width="1"/><path d="M9 0.500V4H12.500" fill="#f9ebb8" stroke="#d6a93a" stroke-width="0.800"/><path d="M2.800 6H9.800M2.800 8.500H9.800M2.800 11H7" stroke="#e2bd5c" stroke-width="0.900"/></svg>
<div class="t" style="left:45.92px;top:287.57px;font-size:13.5px;color:#222;transform:scaleX(0.9476);">Основное</div>
<svg style="left:124px;top:288px" width="16" height="14" viewBox="0 0 16 14" ><path d="M0.600 2A1.500 1.500 0 0 1 2.100 0.500H13.900A1.500 1.500 0 0 1 15.400 2V8.700A1.500 1.500 0 0 1 13.900 10.200H9.800L7.800 13.300L6.600 10.200H2.100A1.500 1.500 0 0 1 0.600 8.700Z" fill="#4a97e6" stroke="#2f78c8" stroke-width="0.800"/><path d="M2.500 3.200H13.500M2.500 5.400H13.500M2.500 7.600H13.500" stroke="#d6e9fb" stroke-width="1.100"/></svg>
<div class="t" style="left:145.97px;top:287.57px;font-size:13.5px;color:#222;transform:scaleX(0.9574);">Комментарии (1)</div>
<svg style="left:266px;top:288.5px" width="14" height="11" viewBox="0 0 14 11" ><rect x="0.500" y="0.500" width="13" height="10" fill="#f2f4fb" stroke="#6b78b8" stroke-width="1"/><rect x="2.500" y="2.800" width="2" height="2" fill="none" stroke="#555" stroke-width="0.700"/><rect x="2.500" y="6.300" width="2" height="2" fill="none" stroke="#555" stroke-width="0.700"/><path d="M6 3.800H11.500M6 7.300H11.500" stroke="#888" stroke-width="0.900"/></svg>
<div class="t" style="left:287.54px;top:287.57px;font-size:13.5px;color:#222;transform:scaleX(0.9433);">Чек-лист</div>
<svg style="left:362px;top:285.5px" width="12" height="16" viewBox="0 0 12 16" ><path d="M0.800 0.800L11 8L0.800 15.200Z" fill="#5cc85a" stroke="#2f9a30" stroke-width="1.200" stroke-linejoin="round"/></svg>
<div class="t" style="left:381.48px;top:287.57px;font-size:13.5px;color:#222;transform:scaleX(0.9487);">Выполнение</div>
<svg style="left:474.5px;top:285.5px" width="17" height="16" viewBox="0 0 17 16" ><rect x="7.300" y="0.800" width="1.800" height="15" fill="#d9a05a" stroke="#b07a30" stroke-width="0.500"/><path d="M3 2.800H14V6H3L1 4.400Z" fill="#f2c890" stroke="#b8823a" stroke-width="0.700"/><path d="M3 8H13.300L15.300 9.600L13.300 11.200H3Z" fill="#f2c890" stroke="#b8823a" stroke-width="0.700"/></svg>
<div class="t" style="left:496.95px;top:287.57px;font-size:13.5px;color:#222;transform:scaleX(0.9706);">Решения</div>
<svg style="left:571px;top:286px" width="17" height="16" viewBox="0 0 17 16" ><path d="M2.500 1.500V13.500M0.500 11L2.500 14L4.500 11" fill="none" stroke="#333" stroke-width="1"/><circle cx="10.300" cy="7" r="4.700" fill="none" stroke="#333" stroke-width="1.100"/><path d="M10.300 4.300V7.200L11.800 8.200" fill="none" stroke="#333" stroke-width="0.900"/></svg>
<div class="t" style="left:593.75px;top:287.57px;font-size:13.5px;color:#222;transform:scaleX(0.9369);">Трудозатраты</div>
<div class="a" style="left:22px;top:314px;width:778px;height:472px;border:1px solid #f4c32c;border-bottom:none"></div>
<div class="a" style="left:25px;top:317px;width:772px;height:124px;border:1px solid #9c9c9c;border-bottom:none"></div>
<svg style="left:39px;top:334px" width="24" height="24" viewBox="0 0 24 24" ><rect width="24" height="24" fill="#d2d5dc"/><path d="M12 3.200C15 3.200 16.300 5.500 16 8.500C15.800 10.500 15.200 11.800 14.300 12.800V14.500C17 15.500 21 17 21.500 24H2.500C3 17 7 15.500 9.700 14.500V12.800C8.800 11.800 8.200 10.500 8 8.500C7.700 5.500 9 3.200 12 3.200Z" fill="#fff"/></svg>
<div class="t" style="left:70.52px;top:342.66px;font-size:12.8px;color:#a3157e;font-weight:bold;-webkit-text-stroke:0;transform:scaleX(0.9362);">Соломахин Руслан</div>
<div class="t" style="left:185.91px;top:342.50px;font-size:13px;color:#8a8a8a;transform:scaleX(0.9152);">22 июля 2020</div>
<div class="t" style="left:267.59px;top:342.50px;font-size:13px;color:#8a8a8a;transform:scaleX(0.9373);">17:52</div>
<div class="t" style="left:38.27px;top:364.77px;font-size:13.5px;color:#0c0c0c;transform:scaleX(0.9567);">Новый комментарий.</div>
<div class="t" style="left:39.17px;top:386.89px;font-size:11px;color:#b4b4b4;transform:scaleX(1.0783);">Ответить</div>
<div class="a" style="left:39px;top:401px;width:744px;height:1px;background:#e9e9e9;"></div>
<div class="a" style="left:261px;top:334px;width:47px;height:30px;border:4.500px solid #e0372d;border-radius:7px"></div>
<svg style="left:305px;top:335px" width="95" height="34" viewBox="0 0 95 34" ><path d="M4.500 16.300L30.600 3L26.500 13.600L87 13.300A2 2 0 0 1 87 17.300L26.500 18.200L30.600 30.300Z" fill="#e0372d"/></svg>
<div class="t" style="left:417.04px;top:339.53px;font-size:16.5px;color:#d8352b;transform:scaleX(1.1059);-webkit-text-stroke:0.250px #d8352b;">Время добавление комментария</div>
<div class="a" style="left:604.5px;top:409px;width:1px;height:16px;background:#e4e4e4;"></div>
<svg style="left:609.5px;top:405.5px" width="18" height="16" viewBox="0 0 18 16" ><path d="M1 6.500C1 3 3.800 0.800 7.800 0.800C11.800 0.800 14.600 3 14.600 6.500C14.600 10 11.800 12 7.800 12C7 12 6.300 11.900 5.700 11.800L2.500 14.500L3.300 10.800C1.800 9.800 1 8.300 1 6.500Z" fill="#eef5fd" stroke="#4f86c9" stroke-width="1.300"/><circle cx="12.500" cy="11.800" r="3.700" fill="#43a83a" stroke="#2a7d24" stroke-width="0.700"/><path d="M12.500 9.700V13.900M10.400 11.800H14.600" stroke="#fff" stroke-width="1.300"/></svg>
<div class="t" style="left:628.94px;top:410.50px;font-size:13px;color:#2862c8;transform:scaleX(0.9407);">Добавить</div>
<div class="a" style="left:688px;top:410px;width:1.3px;height:15px;background:#555;"></div>
<div class="a" style="left:692.5px;top:409px;width:1px;height:16px;background:#e4e4e4;"></div>
<svg style="left:700px;top:407.5px" width="13" height="13" viewBox="0 0 13 13" ><path d="M10.800 3.600A5 5 0 1 0 11.500 7.800" fill="none" stroke="#2a9a30" stroke-width="2"/><path d="M7.600 0.300L12.600 0.800L11.600 5.600Z" fill="#2a9a30"/></svg>
<div class="t" style="left:716.95px;top:410.50px;font-size:13px;color:#2862c8;transform:scaleX(0.9356);">Обновить</div>
<div class="a" style="left:777px;top:410px;width:1.3px;height:15px;background:#555;"></div>
<div class="a" style="left:24px;top:441px;width:776px;height:348px;background:#fff;"></div>
<div class="a" style="left:24px;top:441px;width:1px;height:348px;background:#eadfae;"></div>
<div class="a" style="left:798.5px;top:441px;width:1.5px;height:348px;background:#ece3bd;"></div>
<div class="btn2" style="left:33.5px;top:446.5px;width:54.5px;height:20.5px;border-radius:1.500px"></div>
<div class="a" style="left:61px;top:447.5px;width:1px;height:18.5px;background:#d6d6d6;"></div>
<svg style="left:42.5px;top:453.5px" width="11" height="9" viewBox="0 0 11 9" fill="#4a4a4a"><path d="M0 4.500L4.500 0.300V3.300H11V5.700H4.500V8.700Z"/></svg>
<svg style="left:68.5px;top:453.5px" width="11" height="9" viewBox="0 0 11 9" fill="#a6a6a6"><path d="M11 4.500L6.500 0.300V3.300H0V5.700H6.500V8.700Z"/></svg>
<svg style="left:97px;top:448px" width="17" height="19" viewBox="0 0 17 19" fill="none" stroke="#b4bbc3" stroke-width="0.900"><path d="M8.500 1L10.400 7.300H16.200L11.600 11.300L13.300 17.800L8.500 13.900L3.700 17.800L5.400 11.300L0.800 7.300H6.600Z"/></svg>
<div class="t sub" style="left:120.58px;top:449.88px;font-size:15.5px;color:#111;transform:scaleX(0.8965);-webkit-text-stroke:0.300px #111;">Запрос на изменение № 73 от 22.07.20 (Тестирование исполнителя)</div>
<svg style="left:728.5px;top:450px" width="12" height="13" viewBox="0 0 12 13" fill="none" stroke="#555" stroke-width="1.300"><g transform="translate(6,6.500) scale(0.750,0.840) rotate(-45)"><rect x="-9" y="-2.700" width="18" height="5.400" rx="2.700" stroke-dasharray="4.800 3 18.080 3 13.280 0"/><path d="M-3.800 0H3.800"/></g></svg>
<div class="a" style="left:756px;top:452.500px;width:2px;height:2px;border-radius:50%;background:#777;box-shadow:0 3.300px 0 #777,0 6.600px 0 #777"></div>
<svg style="left:776px;top:454px" width="6" height="6" viewBox="0 0 6 6" stroke="#555" stroke-width="1"><path d="M0.200 0.200L5.800 5.800M5.800 0.200L0.200 5.800"/></svg>
<div class="a" style="left:92.5px;top:477.5px;width:87.5px;height:30px;background:#f1f1f1;border-radius:4px"></div>
<div class="t sub" style="left:40.57px;top:487.27px;font-size:11.5px;color:#3f6ac4;transform:scaleX(0.8318);">Основное</div>
<div class="a" style="left:41px;top:499px;width:43px;height:0;border-top:1px dotted #3f6ac4"></div>
<div class="t sub" style="left:98.22px;top:487.27px;font-size:11.5px;color:#2a2a2a;transform:scaleX(0.8518);">Взаимодействия</div>
<div class="t sub" style="left:187.74px;top:487.27px;font-size:11.5px;color:#3f6ac4;transform:scaleX(0.8289);">Мои заметки</div>
<div class="a" style="left:188.5px;top:499px;width:55px;height:0;border-top:1px dotted #3f6ac4"></div>
<div class="t sub" style="left:259.02px;top:487.27px;font-size:11.5px;color:#3f6ac4;transform:scaleX(0.8331);">Связанные документы</div>
<div class="a" style="left:259.5px;top:499px;width:99.5px;height:0;border-top:1px dotted #3f6ac4"></div>
<div class="t sub" style="left:33.89px;top:516.23px;font-size:14.5px;color:#8e8e8e;transform:scaleX(0.9550);">Взаимодействия по Запрос на изменение № 73 от 22.07.20 (Тестирование исполнителя)</div>
<div class="btn2" style="left:33.5px;top:545px;width:22px;height:21.5px;"></div>
<svg style="left:40px;top:550px" width="10" height="12" viewBox="0 0 10 12" ><rect x="0.500" y="0.500" width="9" height="11" fill="#fff" stroke="#6b7785" stroke-width="1"/><path d="M2.500 3.200H4M2.500 5.700H4M2.500 8.200H4" stroke="#2f7ad0" stroke-width="1"/><path d="M5 3.200H7.500M5 5.700H7.500M5 8.200H7.500" stroke="#777" stroke-width="0.800"/></svg>
<div class="t sub" style="left:62.52px;top:550.27px;font-size:11.5px;color:#444;transform:scaleX(0.8300);">Статус:</div>
<div class="inp" style="left:99px;top:545.500px;width:112.500px;height:21.500px"></div>
<div class="a" style="left:195px;top:546.5px;width:1px;height:19.5px;background:#cfcfcf;"></div>
<div class="t sub" style="left:101.67px;top:550.27px;font-size:11.5px;color:#222;transform:scaleX(0.8967);">Все</div>
<svg style="left:201.6px;top:555.5px" width="4.80" height="2.40" viewBox="0 0 4.80 2.40"><path d="M0 0H4.80L2.40 2.40Z" fill="#555"/></svg>
<div class="t sub" style="left:219.08px;top:550.27px;font-size:11.5px;color:#444;transform:scaleX(0.8176);">Ответственный:</div>
<div class="inp" style="left:292px;top:545.500px;width:239px;height:21.500px"></div>
<div class="a" style="left:484.5px;top:546.5px;width:1px;height:19.5px;background:#cfcfcf;"></div>
<div class="a" style="left:499.5px;top:546.5px;width:1px;height:19.5px;background:#cfcfcf;"></div>
<div class="a" style="left:515.5px;top:546.5px;width:1px;height:19.5px;background:#cfcfcf;"></div>
<svg style="left:490.1px;top:555.5px" width="4.80" height="2.40" viewBox="0 0 4.80 2.40"><path d="M0 0H4.80L2.40 2.40Z" fill="#555"/></svg>
<svg style="left:504.5px;top:553.5px" width="5" height="5" viewBox="0 0 5 5" stroke="#666" stroke-width="0.900"><path d="M0.200 0.200L4.800 4.800M4.800 0.200L0.200 4.800"/></svg>
<svg style="left:520px;top:552px" width="7" height="8" viewBox="0 0 7 8" ><rect x="2.300" y="0.500" width="4.200" height="4.800" fill="#fff" stroke="#555" stroke-width="0.900"/><path d="M2.300 2.500H0.500V7.500H4.500V5.300" fill="none" stroke="#555" stroke-width="0.900"/></svg>
<div class="btn2" style="left:33.5px;top:576.5px;width:60.5px;height:22px;"></div>
<div class="t sub" style="left:44.02px;top:582.27px;font-size:11.5px;color:#333;transform:scaleX(0.8321);">Создать</div>
<svg style="left:85.1px;top:587.5px" width="4.80" height="2.40" viewBox="0 0 4.80 2.40"><path d="M0 0H4.80L2.40 2.40Z" fill="#555"/></svg>
<div class="btn2" style="left:109px;top:576.5px;width:88.5px;height:22px;"></div>
<div class="a" style="left:130.5px;top:577.5px;width:1px;height:20px;background:#cfcfcf;"></div>
<div class="a" style="left:153px;top:577.5px;width:1px;height:20px;background:#cfcfcf;"></div>
<div class="a" style="left:175.5px;top:577.5px;width:1px;height:20px;background:#cfcfcf;"></div>
<svg style="left:114.5px;top:582px" width="11" height="11" viewBox="0 0 11 11" ><path d="M1 5.500L4.200 9L10 1.500" fill="none" stroke="#2e9a3c" stroke-width="2.600"/></svg>
<svg style="left:136px;top:581px" width="12" height="13" viewBox="0 0 12 13" ><path d="M0.500 0.500H5.500L8.500 3.500V11.500H0.500Z" fill="#fff" stroke="#777" stroke-width="0.900"/><path d="M2 4.500H5M2 6.500H4" stroke="#999" stroke-width="0.700"/><circle cx="8" cy="9.500" r="2.800" fill="#fff" stroke="#4a78b8" stroke-width="1"/></svg>
<svg style="left:158px;top:581px" width="11" height="13" viewBox="0 0 11 13" ><circle cx="5.500" cy="3.300" r="2.700" fill="#c98a4a"/><path d="M0.500 12.500C0.500 8 2.500 6.600 5.500 6.600C8.500 6.600 10.500 8 10.500 12.500Z" fill="#3a3a46"/><path d="M4.300 6.600L5.500 11L6.700 6.600Z" fill="#e8c040"/></svg>
<svg style="left:180px;top:583px" width="11" height="8" viewBox="0 0 11 8" ><path d="M10.500 0.800L1 6.800H10.800" fill="none" stroke="#444" stroke-width="1"/></svg>
<div class="btn2" style="left:212.5px;top:576.5px;width:76.5px;height:22px;"></div>
<div class="t sub" style="left:221.73px;top:582.27px;font-size:11.5px;color:#333;transform:scaleX(0.8420);">Показывать</div>
<svg style="left:279.6px;top:587.5px" width="4.80" height="2.40" viewBox="0 0 4.80 2.40"><path d="M0 0H4.80L2.40 2.40Z" fill="#555"/></svg>
<div class="btn2" style="left:711px;top:576.5px;width:45px;height:22.5px;"></div>
<div class="t sub" style="left:720.14px;top:582.27px;font-size:11.5px;color:#333;transform:scaleX(0.9309);">Еще</div>
<svg style="left:747.1px;top:587.5px" width="4.80" height="2.40" viewBox="0 0 4.80 2.40"><path d="M0 0H4.80L2.40 2.40Z" fill="#555"/></svg>
<div class="btn2" style="left:762.5px;top:576.5px;width:22px;height:22.5px;"></div>
<div class="t sub" style="left:770.19px;top:580.95px;font-size:14px;color:#222;font-weight:bold;-webkit-text-stroke:0;transform:scaleX(0.8123);">?</div>
<div class="a" style="left:34px;top:603.5px;width:751px;height:185.5px;background:#fff;border:1px solid #d6d6d6;border-top-color:#a9a9a9;border-bottom:none"></div>
<div class="a" style="left:35px;top:604.5px;width:749px;height:54px;background:#f1f1f1;"></div>
<div class="a" style="left:35px;top:630.5px;width:749px;height:1px;background:#dcdcdc;"></div>
<div class="a" style="left:35px;top:658px;width:749px;height:1px;background:#dcdcdc;"></div>
<div class="a" style="left:61px;top:604.5px;width:1px;height:26px;background:#d9d9d9;"></div>
<div class="a" style="left:662px;top:604.5px;width:1px;height:26px;background:#d9d9d9;"></div>
<div class="a" style="left:741.5px;top:604.5px;width:1px;height:26px;background:#d9d9d9;"></div>
<svg style="left:41.5px;top:613px" width="10" height="8" viewBox="0 0 10 8" ><rect x="0.500" y="0.500" width="9" height="7" fill="#f6d27a" stroke="#d79a2a" stroke-width="1"/><path d="M0.800 0.800L5 4.300L9.200 0.800M0.800 7.200L3.800 4M9.200 7.200L6.200 4" fill="none" stroke="#d79a2a" stroke-width="0.700"/></svg>
<div class="t sub" style="left:67.26px;top:611.27px;font-size:11.5px;color:#555;transform:scaleX(0.8445);">Участники</div>
<div class="t sub" style="left:668.45px;top:611.27px;font-size:11.5px;color:#555;transform:scaleX(0.8048);">Дата</div>
<svg style="left:748.5px;top:610px" width="10" height="12" viewBox="0 0 10 12" fill="none" stroke="#666" stroke-width="0.900"><g transform="rotate(35 5 6)"><path d="M7.300 3V8.600A2.300 2.300 0 0 1 2.700 8.600V2.600A1.600 1.600 0 0 1 5.900 2.600V8.300A0.700 0.700 0 0 1 4.400 8.300V3.600" /></g></svg>
<div class="t sub" style="left:40.32px;top:638.77px;font-size:11.5px;color:#666;transform:scaleX(0.7804);">Тема</div>
<svg style="left:768px;top:639.5px" width="5" height="9" viewBox="0 0 5 9" ><path d="M2.500 0V8M0.500 5.700L2.500 8.300L4.500 5.700" fill="none" stroke="#444" stroke-width="0.900"/></svg>
<div class="a" style="left:35px;top:659px;width:749px;height:49px;background:#fbfbfb;"></div>
<div class="a" style="left:35px;top:708px;width:749px;height:1px;background:#e3e3e3;"></div>
<svg style="left:40.5px;top:665.5px" width="12" height="12" viewBox="0 0 12 12" ><rect x="3" y="1" width="8" height="7" fill="#f6d27a" stroke="#d79a2a" stroke-width="0.900"/><path d="M3.300 1.300L7 4.500L10.700 1.300" fill="none" stroke="#d79a2a" stroke-width="0.700"/><circle cx="2.300" cy="6.300" r="1.700" fill="#3a8ad8"/><path d="M2.300 7.500V11.500" stroke="#3a8ad8" stroke-width="1.100"/></svg>
<div class="t sub" style="left:67.15px;top:665.36px;font-size:10.8px;color:#222;font-weight:bold;-webkit-text-stroke:0;transform:scaleX(0.8160);">Соломахин Руслан</div>
<div class="a sub" style="left:153px;top:665px;width:72px;height:10px;background:linear-gradient(90deg,#c9c9cb 0 16%,#a4a3a6 16% 32%,#b0afb1 32% 50%,#a9a8ad 50% 66%,#bdbdbd 66% 82%,#c8c8c8 82%);filter:blur(0.6px)"></div>
<div class="t sub" style="left:225.97px;top:665.36px;font-size:10.8px;color:#222;font-weight:bold;-webkit-text-stroke:0;">:</div>
<div class="t sub" style="left:57.91px;top:690.86px;font-size:10.8px;color:#222;font-weight:bold;-webkit-text-stroke:0;transform:scaleX(0.8349);">Вам поручено задание ID#73 от ДНС ООО (Тестирование исполнителя)</div>
<div class="t sub" style="left:668.96px;top:665.36px;font-size:10.8px;color:#222;font-weight:bold;-webkit-text-stroke:0;transform:scaleX(0.8350);">12:14</div>
<div class="a" style="left:35px;top:709px;width:749px;height:25px;background:#fef3c9;"></div>
<div class="a" style="left:61px;top:709px;width:1px;height:25px;background:#fbf7e4;"></div>
<div class="a" style="left:34.5px;top:733.8px;width:750px;height:21px;background:#fde58e;border:1.800px solid #f7c622"></div>
<div class="a" style="left:35px;top:755.5px;width:749px;height:1px;background:#e0e6e0;"></div>
<svg style="left:40.5px;top:714.5px" width="12" height="12" viewBox="0 0 12 12" ><rect x="3" y="1" width="8" height="8" rx="1" fill="#dff0d8" stroke="#5aa05a" stroke-width="0.900"/><circle cx="7" cy="5" r="2" fill="none" stroke="#5aa05a" stroke-width="0.800"/><circle cx="2.300" cy="6.300" r="1.700" fill="#3a8ad8"/><path d="M2.300 7.500V11.500" stroke="#3a8ad8" stroke-width="1.100"/></svg>
<div class="t sub" style="left:67.15px;top:714.36px;font-size:10.8px;color:#222;font-weight:bold;-webkit-text-stroke:0;transform:scaleX(0.8160);">Соломахин Руслан</div>
<div class="a sub" style="left:153px;top:714.5px;width:72px;height:10px;background:linear-gradient(90deg,#c9c3ae 0 16%,#a8a090 16% 32%,#b5ad9a 32% 50%,#b0a894 50% 66%,#c4bca6 66% 82%,#cfc8b0 82%);filter:blur(0.6px)"></div>
<div class="t sub" style="left:225.97px;top:714.36px;font-size:10.8px;color:#222;font-weight:bold;-webkit-text-stroke:0;">:</div>
<div class="t sub" style="left:58.45px;top:739.36px;font-size:10.8px;color:#222;font-weight:bold;-webkit-text-stroke:0;transform:scaleX(0.8415);">Добавлен комментарий в задание ID#73 от ДНС ООО (Тестирование исполнителя) (IDC#40)'</div>
<div class="t sub" style="left:668.95px;top:714.36px;font-size:10.8px;color:#222;font-weight:bold;-webkit-text-stroke:0;transform:scaleX(0.8469);">17:52</div>
<div class="a" style="left:415px;top:634.5px;width:213px;height:31.5px;background:#fff;border-radius:3px;opacity:0.960"></div>
<div class="t sub" style="left:422.88px;top:643.38px;font-size:15.5px;color:#d8352b;transform:scaleX(0.9067);-webkit-text-stroke:0.250px #d8352b;">Время создания уведомления</div>
<div class="a" style="left:661px;top:705.500px;width:84px;height:32.500px;border:4.200px solid #e0372d;border-radius:6.500px"></div>
<svg style="left:545px;top:675px" width="120" height="45" viewBox="0 0 120 45" ><path d="M5 5L95 26.500" stroke="#e0372d" stroke-width="3.600" stroke-linecap="round" fill="none"/><path d="M112 31.200L89.500 38.800L91 26.500L94 15.200Z" fill="#e0372d"/></svg>
<div class="a" style="left:827px;top:228px;width:222px;height:26px;background:#f4faf5;"></div>
<div class="t" style="left:831.65px;top:234.77px;font-size:13.5px;color:#222;font-weight:bold;-webkit-text-stroke:0;transform:scaleX(0.9709);">Исполнитель:</div>
<div class="btn" style="left:827px;top:271px;width:30px;height:24.5px;"></div>
<svg style="left:834px;top:276px" width="16" height="17" viewBox="0 0 16 17" ><rect x="0.800" y="5.600" width="6.400" height="5.600" rx="2.800" fill="none" stroke="#4a4a4a" stroke-width="1.500"/><rect x="8.800" y="5.600" width="6.400" height="5.600" rx="2.800" fill="none" stroke="#4a4a4a" stroke-width="1.500"/><path d="M5.500 8.400H10.500" stroke="#4a4a4a" stroke-width="1.500"/><path d="M8 0.500V3.800M4.800 1.200L6.500 3.800M11.200 1.200L9.500 3.800M8 16.500V13.200M4.800 15.800L6.500 13.200M11.200 15.800L9.500 13.200" stroke="#d83a30" stroke-width="1" fill="none"/></svg>
<svg style="left:893px;top:274px" width="15" height="15" viewBox="0 0 15 15" ><path d="M6.300 14.500C6 10 7 7.300 9.700 7.300C12.400 7.300 13.800 10 13.500 14.500Z" fill="#4cb04c" stroke="#2a7a2a" stroke-width="0.700"/><path d="M8.700 7.500L9.700 12L10.700 7.500Z" fill="#e8f5e8"/><circle cx="9.700" cy="3.800" r="2.800" fill="#f4cf58" stroke="#b8860b" stroke-width="0.700"/><path d="M1 5.500L6.300 11.300" stroke="#e02a20" stroke-width="2" fill="none"/><path d="M7.600 12.800L2.600 11.600L6.600 7.800Z" fill="#e02a20"/></svg>
<div class="t" style="left:911.90px;top:275.80px;font-size:16.3px;color:#1c1c22;transform:scaleX(0.9759);">Соломахин Руслан</div>
<div class="a" style="left:827px;top:315px;width:222px;height:27px;background:#dc143c;"></div>
<div class="t" style="left:832.44px;top:322.57px;font-size:13.5px;color:#fff;font-weight:bold;-webkit-text-stroke:0;transform:scaleX(0.9464);">Даты (!)</div>
<div class="t" style="left:826.93px;top:352.57px;font-size:13.5px;color:#4a4a4a;transform:scaleX(0.9460);">Отреагировать до:</div>
<div class="inp" style="left:827px;top:371px;width:182px;height:25px"></div>
<div class="a" style="left:987.5px;top:372px;width:1px;height:23px;background:#d4d4d4;"></div>
<svg style="left:994.8px;top:382.7px" width="5.00" height="2.50" viewBox="0 0 5.00 2.50"><path d="M0 0H5.00L2.50 2.50Z" fill="#8a8a8a"/></svg>
<div class="t" style="left:839.23px;top:376.80px;font-size:13px;color:#999;">.</div>
<div class="t" style="left:851.63px;top:376.80px;font-size:13px;color:#999;">.</div>
<div class="t" style="left:883.43px;top:376.80px;font-size:13px;color:#999;">:</div>
<div class="t" style="left:895.03px;top:376.80px;font-size:13px;color:#999;">:</div>
<div class="t" style="left:826.45px;top:406.07px;font-size:13.5px;color:#4a4a4a;transform:scaleX(0.9676);">Выполнить до:</div>
<div class="inp" style="left:827px;top:425px;width:182px;height:25px"></div>
<div class="a" style="left:987.5px;top:426px;width:1px;height:23px;background:#d4d4d4;"></div>
<svg style="left:994.8px;top:436.7px" width="5.00" height="2.50" viewBox="0 0 5.00 2.50"><path d="M0 0H5.00L2.50 2.50Z" fill="#8a8a8a"/></svg>
<div class="t" style="left:839.23px;top:430.80px;font-size:13px;color:#999;">.</div>
<div class="t" style="left:851.63px;top:430.80px;font-size:13px;color:#999;">.</div>
<div class="t" style="left:883.43px;top:430.80px;font-size:13px;color:#999;">:</div>
<div class="t" style="left:895.03px;top:430.80px;font-size:13px;color:#999;">:</div>
<div class="a" style="left:827px;top:459px;width:222px;height:26px;background:#f4faf5;"></div>
<div class="t" style="left:832.37px;top:465.67px;font-size:13.5px;color:#222;font-weight:bold;-webkit-text-stroke:0;transform:scaleX(0.9759);">Текущий этап:</div>
<svg style="left:937px;top:503.5px" width="17" height="10" viewBox="0 0 17 10" ><rect x="0.500" y="0.500" width="16" height="9" rx="1" fill="#f59a23" stroke="#c96f0a" stroke-width="0.800"/><path d="M0.800 2.500H16.200" stroke="#fbd08a" stroke-width="1.600"/><text x="1.800" y="7.800" font-family="Liberation Sans,sans-serif" font-size="6" font-weight="bold" fill="#fff" textLength="13.500" lengthAdjust="spacingAndGlyphs">NEW</text></svg>
<div class="t" style="left:956.70px;top:501.53px;font-size:16.5px;color:#860c0c;transform:scaleX(0.9854);">Новый</div>
<div class="a" style="left:827px;top:536px;width:222px;height:26px;background:#f4faf5;"></div>
<div class="t" style="left:831.61px;top:542.77px;font-size:13.5px;color:#222;font-weight:bold;-webkit-text-stroke:0;transform:scaleX(1.0123);">Перевести задание на этап:</div>
<div class="inp" style="left:827px;top:571px;width:133px;height:25px"></div>
<div class="a" style="left:917.5px;top:572px;width:1px;height:23px;background:#cfcfcf;"></div>
<div class="a" style="left:938.5px;top:572px;width:1px;height:23px;background:#cfcfcf;"></div>
<div class="t" style="left:908.03px;top:577.07px;font-size:13.5px;color:#333;transform:scaleX(0.9927);">0</div>
<svg style="left:925px;top:582.5px" width="5.40" height="2.70" viewBox="0 0 5.40 2.70"><path d="M0 0H5.40L2.70 2.70Z" fill="#555"/></svg>
<svg style="left:946px;top:580.5px" width="6" height="6" viewBox="0 0 6 6" stroke="#555" stroke-width="1"><path d="M0.200 0.200L5.800 5.800M5.800 0.200L0.200 5.800"/></svg>
<div class="a" style="left:960px;top:570px;width:89px;height:28px;overflow:hidden"><div class="t" style="left:5.55px;top:7.07px;font-size:13.5px;color:#333;transform:scaleX(0.9459);">% выполнения</div>
</div>
<div class="a" style="left:840px;top:600px;width:209px;height:52px;overflow:hidden"><div class="btn" style="left:7px;top:5.5px;width:230px;height:38.5px;"></div>
</div>
<svg style="left:854px;top:617px" width="16" height="16" viewBox="0 0 16 16" ><circle cx="9" cy="8" r="6.300" fill="#fff" stroke="#3a8fd8" stroke-width="1.300"/><circle cx="9" cy="8" r="4" fill="#f0701a"/><circle cx="9" cy="8" r="1.600" fill="#fff"/><path d="M0.300 4.800L6.500 8L0.300 11.200Z" fill="#e8501a"/></svg>
<div class="t" style="left:941.97px;top:618.57px;font-size:13.5px;color:#0a0ac8;transform:scaleX(0.9552);">Регистрация</div>
<div class="a" style="left:827px;top:673px;width:222px;height:29.5px;background:#f4faf5;"></div>
<div class="t" style="left:832.37px;top:679.37px;font-size:13.5px;color:#222;font-weight:bold;-webkit-text-stroke:0;transform:scaleX(0.9972);">Трудозатраты:</div>
<svg style="left:1010px;top:680px" width="17" height="16" viewBox="0 0 17 16" ><circle cx="7.500" cy="9" r="6" fill="#fdfdfd" stroke="#667" stroke-width="1.200"/><path d="M5.500 1H9.500M7.500 1V3" stroke="#667" stroke-width="1.300"/><path d="M2.200 3.200L3.500 4.500" stroke="#c33" stroke-width="1.300"/><path d="M7.500 5.500V9L10 10.500" stroke="#556" stroke-width="1" fill="none"/><path d="M10.500 8.500L16 11.800L10.500 15.200Z" fill="#3a8fe0" stroke="#1f65b0" stroke-width="0.600"/></svg>
<div class="a" style="left:827px;top:712px;width:222px;height:26px;background:#f4faf5;"></div>
<div class="t" style="left:832.37px;top:717.87px;font-size:13.5px;color:#222;font-weight:bold;-webkit-text-stroke:0;transform:scaleX(0.9648);">Теги:</div>
<div class="a" style="left:827px;top:747px;width:222px;height:25px;overflow:hidden"><div class="inp" style="left:0;top:0;width:240px;height:25px"></div></div>
<div class="t" style="left:831.48px;top:752.27px;font-size:13.5px;color:#b4b4b4;transform:scaleX(0.9450);">Выберите или введите тег</div>
<div class="a" style="left:2px;top:791px;width:1047px;height:25px;background:#fff;"></div>
<div class="a" style="left:22px;top:785px;width:3px;height:1px;background:#f4c32c;"></div>
<div class="a" style="left:25px;top:806px;width:1002px;height:8px;background:#d5d5d5;border-radius:4px"></div>
<div class="a" style="left:25px;top:806px;width:939.5px;height:8px;background:#9b9b9b;border-radius:4px"></div>
<svg style="left:11px;top:806px" width="4" height="8" viewBox="0 0 4 8" fill="#b9b9b9"><path d="M4 0V8L0 4Z"/></svg>
<svg style="left:1037px;top:806px" width="4.5" height="8" viewBox="0 0 4.5 8" fill="#444"><path d="M0 0V8L4.500 4Z"/></svg>
</body>
</html>
